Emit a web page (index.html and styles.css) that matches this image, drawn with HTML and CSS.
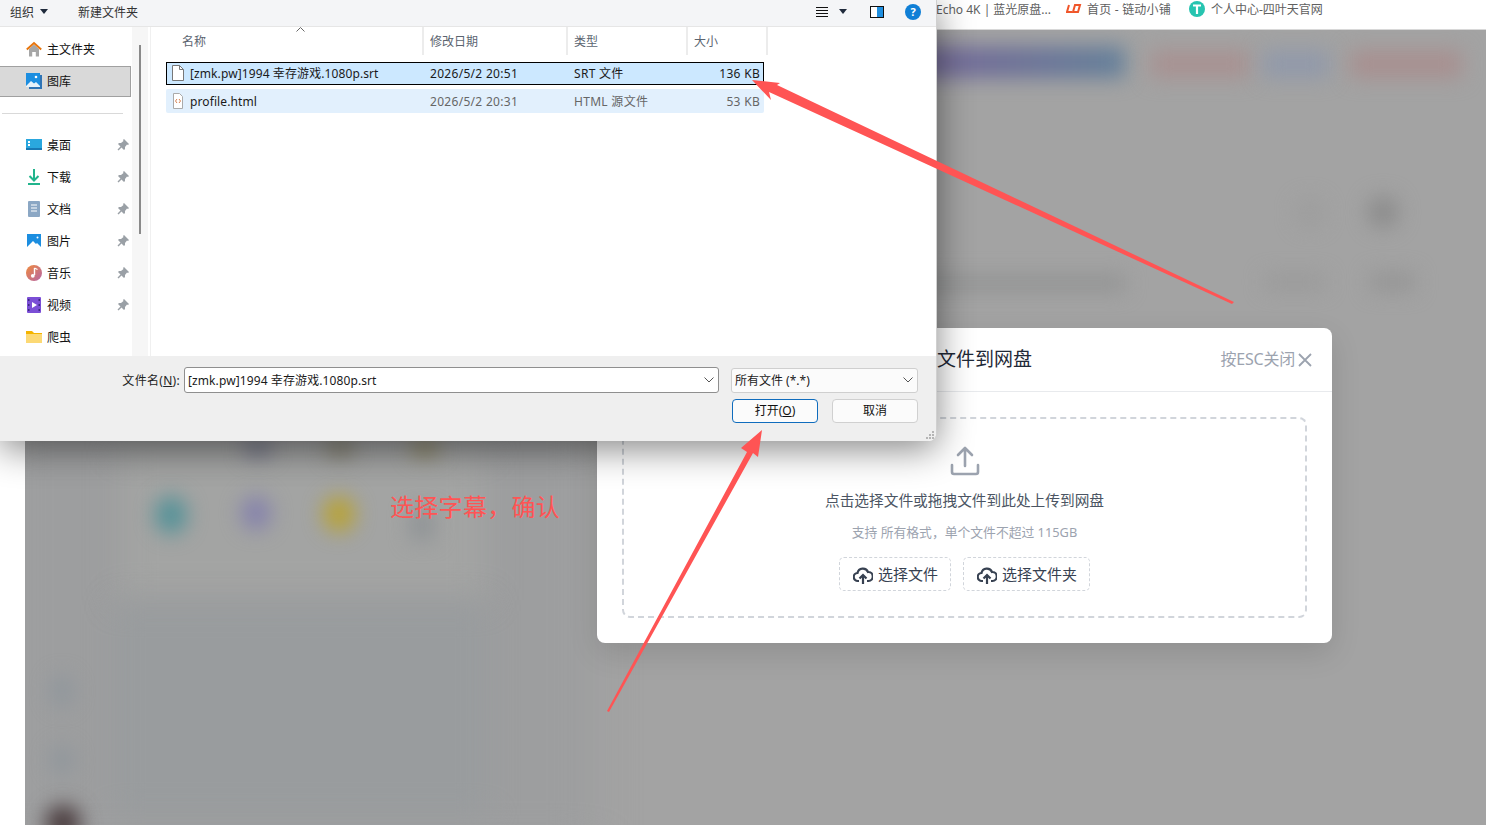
FILE: index.html
```html
<!DOCTYPE html>
<html lang="zh-CN">
<head>
  <meta charset="UTF-8">
  <title>选择字幕</title>
  <link rel="stylesheet" href="styles.css">
</head>
<body>
  <div class="page">
    <div class="bookmarks">
      <span class="mark">Echo 4K | 蓝光原盘...</span>
      <span class="mark mark-ld">
        <svg width="16" height="10" viewBox="0 0 16 10"><path d="M3 1 1 8h5M9 1h5l-2 7H7z" fill="none" stroke="#f0562a" stroke-width="2"/></svg>
        首页 - 链动小铺
      </span>
      <span class="mark mark-t">
        <svg width="16" height="16" viewBox="0 0 16 16"><circle cx="8" cy="8" r="8" fill="#27c4b0"/><path d="M4 4.500h8M8 4.500V13" stroke="#fff" stroke-width="2.200" fill="none"/></svg>
        个人中心-四叶天官网
      </span>
    </div>

    <div class="backdrop">
      <div class="blob b-left"></div>
      <div class="blob b-title"></div>
      <div class="blob b-red1"></div>
      <div class="blob b-blue"></div>
      <div class="blob b-red2"></div>
      <div class="blob b-dot1"></div>
      <div class="blob b-dot2"></div>
      <div class="blob b-bar1"></div>
      <div class="blob b-bar2"></div>
      <div class="blob b-bar3"></div>
      <div class="blob b-card"></div>
      <div class="blob b-panel"></div>
      <div class="blob b-top1"></div>
      <div class="blob b-top2"></div>
      <div class="blob b-top3"></div>
      <div class="blob b-teal"></div>
      <div class="blob b-purple"></div>
      <div class="blob b-yellow"></div>
      <div class="blob b-grey"></div>
      <div class="blob b-side1"></div>
      <div class="blob b-side2"></div>
      <div class="blob b-avatar"></div>
    </div>
  </div>

  <div class="modal">
    <div class="modal-head">
      <h2 class="modal-title">上传文件到网盘</h2>
      <div class="modal-close">
        按ESC关闭
        <svg width="14" height="14" viewBox="0 0 14 14"><path d="M1 1l12 12M13 1 1 13" stroke="#9ca3af" stroke-width="1.800" fill="none"/></svg>
      </div>
    </div>
    <div class="modal-body">
      <div class="dropzone">
        <svg class="drop-icon" width="30" height="30" viewBox="0 0 30 30"><path d="M15 2v18M8 9l7-7 7 7M2 19v7a2 2 0 0 0 2 2h22a2 2 0 0 0 2-2v-7" fill="none" stroke="#9ca3af" stroke-width="2.600" stroke-linecap="round" stroke-linejoin="round"/></svg>
        <p class="drop-text">点击选择文件或拖拽文件到此处上传到网盘</p>
        <p class="drop-sub">支持 所有格式，单个文件不超过 115GB</p>
        <div class="drop-btns">
          <div class="drop-btn">
            <svg width="20" height="20" viewBox="0 0 20 20"><path d="M6 16H5a4 4 0 0 1-.5-8A5.500 5.500 0 0 1 15 7a4.500 4.500 0 0 1 .5 9H14M10 19V10M6.500 13.500 10 10l3.500 3.500" fill="none" stroke="#374151" stroke-width="2.200"/></svg>
            选择文件
          </div>
          <div class="drop-btn">
            <svg width="20" height="20" viewBox="0 0 20 20"><path d="M6 16H5a4 4 0 0 1-.5-8A5.500 5.500 0 0 1 15 7a4.500 4.500 0 0 1 .5 9H14M10 19V10M6.500 13.500 10 10l3.500 3.500" fill="none" stroke="#374151" stroke-width="2.200"/></svg>
            选择文件夹
          </div>
        </div>
      </div>
    </div>
  </div>

  <div class="dialog">
    <div class="toolbar">
      <span class="tool-org">组织 <i class="caret"></i></span>
      <span>新建文件夹</span>
      <div class="tool-right">
        <svg width="14" height="12" viewBox="0 0 14 12"><path d="M1 1.500h12M1 4.500h12M1 7.500h12M1 10.500h12" stroke="#111" stroke-width="1"/></svg>
        <i class="caret"></i>
        <svg class="tool-pane" width="14" height="12" viewBox="0 0 14 12"><rect x=".5" y=".5" width="13" height="11" fill="#fff" stroke="#111"/><rect x="7" y="1" width="6" height="10" fill="#1f8fe0"/></svg>
        <svg class="tool-help" width="16" height="16" viewBox="0 0 16 16"><circle cx="8" cy="8" r="8" fill="#0f7fd6"/><text x="8" y="12" text-anchor="middle" class="help-q">?</text></svg>
      </div>
    </div>

    <div class="browser">
      <nav class="nav">
        <div class="nav-item">
          <svg width="16" height="16" viewBox="0 0 16 16"><path d="M3 8 8 3.500 13 8v7.500H9.800V11H6.200v4.500H3z" fill="#a6a6a6"/><path d="M.8 8.500 8 2l7.200 6.500" fill="none" stroke="#e8750c" stroke-width="2"/></svg>
          主文件夹
        </div>
        <div class="nav-item selected">
          <svg width="16" height="16" viewBox="0 0 16 16"><rect y="0" width="14" height="14" fill="#1c8ee0"/><path d="M0 13l5-5 3 2.500L10 9l4 4v1H0z" fill="#e6f2fb"/><circle cx="10" cy="4" r="1.300" fill="#fff"/><path d="M14 2h2v14H3v-2h11z" fill="#2f74b5"/></svg>
          图库
        </div>
        <div class="nav-line"></div>
        <div class="nav-item">
          <svg width="16" height="16" viewBox="0 0 16 16"><rect y="2" width="16" height="11" fill="#2aa7de"/><rect y="11" width="16" height="2" fill="#1878b4"/><path d="M2 4h2v2H2zM2 7h2v2H2z" fill="#fff"/></svg>
          桌面
          <svg class="pin" width="12" height="12" viewBox="0 0 12 12"><path d="M7 0l5 5-1 1-1-.5L8 8v2L7 11 4.500 8.500 1.500 11.500.5 10.500l3-3L1 5l1-1h2l2.500-2L6 1z" fill="#9aa0a6"/></svg>
        </div>
        <div class="nav-item">
          <svg width="16" height="16" viewBox="0 0 16 16"><path d="M8 0v11M3.500 7 8 11.500 12.500 7" fill="none" stroke="#21b48c" stroke-width="2"/><path d="M2 15h12" stroke="#21b48c" stroke-width="2"/></svg>
          下载
          <svg class="pin" width="12" height="12" viewBox="0 0 12 12"><path d="M7 0l5 5-1 1-1-.5L8 8v2L7 11 4.500 8.500 1.500 11.500.5 10.500l3-3L1 5l1-1h2l2.500-2L6 1z" fill="#9aa0a6"/></svg>
        </div>
        <div class="nav-item">
          <svg width="16" height="16" viewBox="0 0 16 16"><rect x="2" y="0" width="12" height="16" rx="1" fill="#8ba7c4"/><path d="M5 4h6M5 7h6M5 10h6" stroke="#fff"/></svg>
          文档
          <svg class="pin" width="12" height="12" viewBox="0 0 12 12"><path d="M7 0l5 5-1 1-1-.5L8 8v2L7 11 4.500 8.500 1.500 11.500.5 10.500l3-3L1 5l1-1h2l2.500-2L6 1z" fill="#9aa0a6"/></svg>
        </div>
        <div class="nav-item">
          <svg width="16" height="16" viewBox="0 0 16 16"><rect x="1" y="1" width="14" height="14" fill="#1c8ee0"/><path d="M1 14l6-6 3 3 1-1 4 4v1H1z" fill="#fff"/><circle cx="11.500" cy="4.500" r="1" fill="#fff"/></svg>
          图片
          <svg class="pin" width="12" height="12" viewBox="0 0 12 12"><path d="M7 0l5 5-1 1-1-.5L8 8v2L7 11 4.500 8.500 1.500 11.500.5 10.500l3-3L1 5l1-1h2l2.500-2L6 1z" fill="#9aa0a6"/></svg>
        </div>
        <div class="nav-item">
          <svg width="16" height="16" viewBox="0 0 16 16"><defs><linearGradient id="music" x1="0" y1="0" x2="1" y2="1"><stop offset="0" stop-color="#f08a3c"/><stop offset="1" stop-color="#b566a8"/></linearGradient></defs><circle cx="8" cy="8" r="8" fill="url(#music)"/><path d="M8.500 3v7" stroke="#fff" stroke-width="1.400"/><path d="M8.500 3l3 1.500" stroke="#fff" stroke-width="1.200"/><circle cx="6.800" cy="10.800" r="1.900" fill="#fff"/></svg>
          音乐
          <svg class="pin" width="12" height="12" viewBox="0 0 12 12"><path d="M7 0l5 5-1 1-1-.5L8 8v2L7 11 4.500 8.500 1.500 11.500.5 10.500l3-3L1 5l1-1h2l2.500-2L6 1z" fill="#9aa0a6"/></svg>
        </div>
        <div class="nav-item">
          <svg width="16" height="16" viewBox="0 0 16 16"><rect x="1" y="0" width="14" height="16" rx="1" fill="#7b4fd6"/><path d="M6 5l5 3-5 3z" fill="#fff"/><path d="M2 2h1.500v2H2zM2 7h1.500v2H2zM2 12h1.500v2H2zM12.500 2H14v2h-1.500zM12.500 7H14v2h-1.500zM12.500 12H14v2h-1.500z" fill="#3d2a80"/></svg>
          视频
          <svg class="pin" width="12" height="12" viewBox="0 0 12 12"><path d="M7 0l5 5-1 1-1-.5L8 8v2L7 11 4.500 8.500 1.500 11.500.5 10.500l3-3L1 5l1-1h2l2.500-2L6 1z" fill="#9aa0a6"/></svg>
        </div>
        <div class="nav-item">
          <svg width="16" height="16" viewBox="0 0 16 16"><path d="M0 2h6l2 2h8v10H0z" fill="#f4b400"/><rect y="5" width="16" height="9" fill="#fcd975"/></svg>
          爬虫
        </div>
      </nav>

      <div class="nav-scroll"><div class="nav-thumb"></div></div>

      <div class="files">
        <div class="file-head">
          <span class="col-name">名称</span>
          <span class="col-date">修改日期</span>
          <span class="col-type">类型</span>
          <span class="col-size">大小</span>
          <svg class="sort-up" width="9" height="5" viewBox="0 0 9 5"><path d="M.5 4.500l4-4 4 4" fill="none" stroke="#666"/></svg>
        </div>
        <div class="file-row active">
          <span class="col-name">
            <svg width="14" height="16" viewBox="0 0 14 16"><path d="M1.500.5h7l4 4v11h-11z" fill="#fff" stroke="#777"/><path d="M8.500.5v4h4" fill="none" stroke="#777"/></svg>
            <span class="file-name">[zmk.pw]1994 幸存游戏.1080p.srt</span>
          </span>
          <span class="col-date">2026/5/2 20:51</span>
          <span class="col-type">SRT 文件</span>
          <span class="col-size">136 KB</span>
        </div>
        <div class="file-row hover">
          <span class="col-name">
            <svg width="14" height="16" viewBox="0 0 14 16"><path d="M2.500.5h6l3 3v12h-9z" fill="#fff" stroke="#aaa"/><path d="M6 6 4.500 8 6 10M8 6l1.500 2L8 10" fill="none" stroke="#d9814f"/></svg>
            <span class="file-name">profile.html</span>
          </span>
          <span class="col-date">2026/5/2 20:31</span>
          <span class="col-type">HTML 源文件</span>
          <span class="col-size">53 KB</span>
        </div>
      </div>
    </div>

    <div class="footer">
      <div class="footer-row">
        <label class="name-label">文件名(<u>N</u>):</label>
        <div class="name-input">
          <span class="file-name">[zmk.pw]1994 幸存游戏.1080p.srt</span>
          <svg width="10" height="6" viewBox="0 0 10 6"><path d="M.5.500 5 5 9.500.500" fill="none" stroke="#555"/></svg>
        </div>
        <div class="type-select">
          所有文件 (*.*)
          <svg width="10" height="6" viewBox="0 0 10 6"><path d="M.5.500 5 5 9.500.500" fill="none" stroke="#555"/></svg>
        </div>
      </div>
      <div class="footer-btns">
        <button class="btn primary">打开(<u>O</u>)</button>
        <button class="btn">取消</button>
      </div>
      <svg class="grip" width="10" height="10" viewBox="0 0 10 10"><path d="M7 1h2v2H7zM4 4h2v2H4zM7 4h2v2H7zM1 7h2v2H1zM4 7h2v2H4zM7 7h2v2H7z" fill="#b5b5b5"/></svg>
    </div>
  </div>

  <div class="note">选择字幕，确认</div>

  <svg class="arrows" width="1486" height="825" viewBox="0 0 1486 825">
    <path d="M752 80 780 83 777 85 1234 302 1232 304 769 92 771 100z" fill="#ff5454"/>
    <path d="M762 430 758 457 753 453 609 712 607 711 747 452 741 448z" fill="#ff5454"/>
  </svg>
</body>
</html>
```

FILE: styles.css
```css
* { box-sizing: border-box; }
html, body { margin: 0; height: 100%; }
body { position: relative; width: 1486px; height: 825px; overflow: hidden; background: #fff; font-family: "Noto Sans", "Noto Sans CJK SC", sans-serif; font-size: 12px; color: #1a1a1a; }
p, h2 { margin: 0; }

/* page behind the dialogs */
.page { height: 825px; display: flex; flex-direction: column; }
.bookmarks { height: 30px; flex: none; display: flex; align-items: flex-start; gap: 15px; padding-left: 936px; padding-top: 1px; font-size: 12px; color: #606060; background: #fff; border-bottom: 1px solid #d8d8d8; }
.mark { height: 16px; display: flex; align-items: center; gap: 5px; white-space: nowrap; }
.mark-ld { letter-spacing: .2px; }
.mark-t { gap: 6px; margin-left: 3px; }
.backdrop { position: relative; flex: 1; margin-left: 25px; background: #a3a3a3; overflow: hidden; }
.blob { position: absolute; filter: blur(10px); }
.b-left { left: -20px; top: 400px; width: 590px; height: 420px; background: #9d9e9f; filter: blur(20px); }
.b-title { left: 880px; top: 16px; width: 220px; height: 32px; background: linear-gradient(90deg, #76699a, #6f7198 45%, #64809a); }
.b-red1 { left: 1125px; top: 20px; width: 100px; height: 28px; background: #a89292; }
.b-blue { left: 1238px; top: 20px; width: 66px; height: 28px; background: #9199aa; }
.b-red2 { left: 1325px; top: 20px; width: 112px; height: 28px; background: #a89090; }
.b-dot1 { left: 1271px; top: 169px; width: 28px; height: 28px; border-radius: 50%; background: #9d9d9d; }
.b-dot2 { left: 1342px; top: 166px; width: 32px; height: 32px; border-radius: 50%; background: #8c8c8c; }
.b-bar1 { left: 890px; top: 245px; width: 210px; height: 16px; background: #929393; }
.b-bar2 { left: 1240px; top: 245px; width: 60px; height: 14px; background: #999; }
.b-bar3 { left: 1345px; top: 243px; width: 45px; height: 18px; background: #959595; }
.b-card { left: 95px; top: 420px; width: 365px; height: 150px; background: #a3a4a3; filter: blur(16px); }
.b-panel { left: 88px; top: 575px; width: 375px; height: 210px; background: #999c9e; filter: blur(14px); }
.b-top1 { left: 220px; top: 410px; width: 26px; height: 16px; background: #74768a; }
.b-top2 { left: 302px; top: 410px; width: 26px; height: 16px; background: #827e6c; }
.b-top3 { left: 387px; top: 410px; width: 26px; height: 16px; background: #8c8664; }
.b-teal { left: 130px; top: 466px; width: 32px; height: 38px; border-radius: 50%; background: #559298; }
.b-purple { left: 216px; top: 466px; width: 30px; height: 34px; border-radius: 50%; background: #8582ac; }
.b-yellow { left: 298px; top: 466px; width: 32px; height: 36px; border-radius: 50%; background: #b8a338; }
.b-grey { left: 385px; top: 480px; width: 24px; height: 30px; background: #8f9396; }
.b-side1 { left: 26px; top: 645px; width: 22px; height: 32px; border-radius: 50%; background: #8f969c; }
.b-side2 { left: 26px; top: 716px; width: 22px; height: 28px; border-radius: 50%; background: #8f969c; }
.b-avatar { left: 20px; top: 775px; width: 36px; height: 36px; border-radius: 50%; background: #4a3c3e; }

/* upload modal */
.modal { position: absolute; left: 597px; top: 328px; width: 735px; height: 315px; background: #fff; border-radius: 8px; box-shadow: 0 10px 30px rgba(0, 0, 0, .12); }
.modal-head { height: 64px; display: flex; align-items: center; justify-content: space-between; padding: 0 20px 4px 302px; border-bottom: 1px solid #e8eaed; }
.modal-title { font-size: 19px; font-weight: 400; color: #1f2937; }
.modal-close { display: flex; align-items: center; gap: 3px; font-size: 16px; letter-spacing: -.2px; color: #9ca3af; }
.modal-close svg { margin-top: 4px; }
.modal-body { padding: 25px; }
.dropzone { height: 201px; display: flex; flex-direction: column; align-items: center; padding-top: 27px; border: 2px dashed #d1d5db; border-radius: 8px; }
.drop-icon { display: block; }
.drop-text { margin-top: 14px; font-size: 14.7px; line-height: 20px; color: #4b5563; }
.drop-sub { margin-top: 13px; font-size: 12.8px; line-height: 18px; color: #9ca3af; }
.drop-btns { display: flex; gap: 12px; margin-top: 16px; }
.drop-btn { height: 34px; display: flex; align-items: center; gap: 5px; padding: 0 12px 2px; font-size: 15px; color: #374151; border: 1px dashed #d1d5db; border-radius: 5px; background: #fff; }
.drop-btn svg { margin: 4px 0 0 1px; }

/* file dialog */
.dialog { position: absolute; left: 0; top: 0; width: 937px; height: 441px; display: flex; flex-direction: column; background: #fff; border-right: 1px solid #d0d0d0; border-radius: 0 0 8px 0; box-shadow: 0 8px 36px rgba(0, 0, 0, .48); }
.toolbar { height: 27px; flex: none; display: flex; align-items: center; gap: 30px; padding: 0 15px 3px 10px; background: #f4f5f7; border-bottom: 1px solid #e6e6e6; color: #333; }
.tool-org { display: flex; align-items: center; gap: 6px; }
.caret { display: inline-block; width: 0; height: 0; border: 4px solid transparent; border-top: 5px solid #1f2a3c; border-bottom: 0; }
.tool-right { margin-left: auto; display: flex; align-items: center; gap: 10px; }
.tool-pane { margin-left: 13px; }
.tool-help { margin-left: 11px; }
.help-q { font-family: "Noto Sans", sans-serif; font-size: 11px; font-weight: 700; fill: #fff; }

.browser { height: 329px; flex: none; display: flex; overflow: hidden; }
.nav { width: 132px; flex: none; padding-top: 6px; }
.nav-item { height: 32px; display: flex; align-items: center; gap: 5px; padding-left: 26px; color: #111; }
.nav-item.selected { height: 31px; margin-top: 1px; margin-right: 1px; padding-bottom: 1px; background: #d9d9d9; border: 1px solid #a0a0a0; border-left: 0; }
.nav-line { height: 1px; margin: 16px 9px 15px 2px; background: #d9d9d9; }
.pin { margin-left: auto; margin-right: 3px; }
.nav-scroll { width: 16px; flex: none; background: #f6f6f6; padding: 18px 7px 0; }
.nav-thumb { width: 2px; height: 189px; background: #8a8a8a; }
.files { flex: 1; margin-left: 2px; border-left: 1px solid #f0f0f0; padding-left: 15px; }
.file-head { position: relative; height: 28px; display: flex; align-items: center; color: #5b6470; }
.sort-up { position: absolute; left: 130px; top: 0; }
.file-head span, .file-row > span { flex: none; padding-left: 6px; }
.col-name { width: 258px; display: flex; align-items: center; gap: 5px; white-space: nowrap; }
.col-date { width: 144px; }
.col-type { width: 120px; }
.col-size { width: 80px; }
.file-head .col-name { padding-left: 16px; padding-top: 1px; }
.file-head span { height: 28px; line-height: 30px; border-right: 2px solid #ececec; }
.file-row { width: 598px; display: flex; align-items: center; padding-bottom: 1px; }
.file-row .col-name { padding-left: 4px; color: #1a1a1a; }
.file-row .col-date, .file-row .col-type, .file-row .col-size { letter-spacing: .3px; }
.file-row .col-size { width: 76px; padding-right: 4px; text-align: right; }
.file-name { letter-spacing: .1px; }
.file-row.active { height: 23px; margin-top: 7px; background: #cce8ff; border: 1px solid #000; }
.file-row.active .col-name { width: 257px; }
.file-row.active .col-size { width: 75px; padding-right: 3px; }
.file-row.hover { height: 24px; margin-top: 4px; padding-bottom: 0; background: #e2f0fd; color: #666; border-radius: 2px; }
.file-row.hover .col-name { padding-left: 5px; }

.footer { position: relative; flex: 1; padding: 11px 18px 0 0; background: #efefef; border-radius: 0 0 8px 0; }
.footer-row { display: flex; align-items: center; }
.name-label { width: 184px; padding-right: 4px; text-align: right; letter-spacing: .3px; color: #222; }
.name-input { width: 535px; height: 26px; display: flex; align-items: center; justify-content: space-between; padding: 0 4px 0 3px; background: #fff; border: 1px solid #8f8f8f; border-radius: 3px; color: #1a1a1a; }
.type-select { width: 187px; height: 25px; margin-left: 12px; display: flex; align-items: center; justify-content: space-between; padding: 0 4px 0 3px; background: #fbfbfb; border: 1px solid #cfcfcf; border-radius: 3px; color: #1a1a1a; }
.footer-btns { display: flex; justify-content: flex-end; gap: 14px; margin-top: 6px; }
.btn { width: 86px; height: 24px; padding: 0 0 2px; font: inherit; color: #111; background: #fbfbfb; border: 1px solid #d0d0d0; border-radius: 4px; }
.btn.primary { border-color: #0f6cbd; }
.grip { position: absolute; right: 1px; bottom: 1px; }

/* annotations */
.note { position: absolute; left: 390px; top: 490px; font-size: 24px; line-height: 34px; letter-spacing: .3px; color: #ff5454; white-space: nowrap; }
.arrows { position: absolute; left: 0; top: 0; pointer-events: none; }
```
